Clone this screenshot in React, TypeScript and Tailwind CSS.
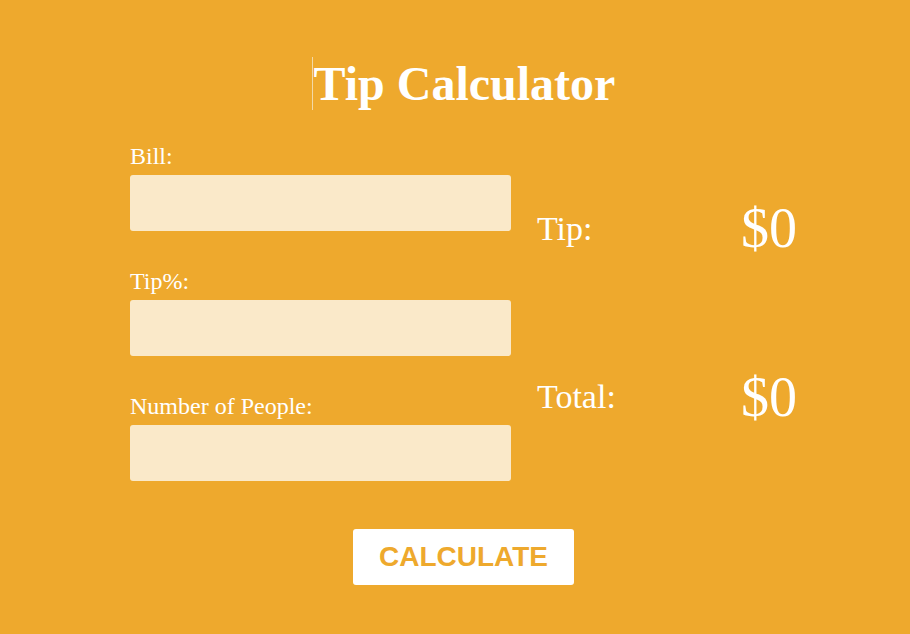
import React from "react";

function Field({ label }: { label: string }) {
  return (
    <div className="flex flex-col">
      <label className="text-[24px] leading-[25px] text-white mb-[6px]">{label}</label>
      <input
        type="text"
        className="h-[56px] w-full rounded-[3px] bg-[#fae9c9] border-0 outline-none px-3 text-[20px]"
      />
    </div>
  );
}

function Result({ label, value }: { label: string; value: string }) {
  return (
    <div className="flex items-center justify-between">
      <span className="text-[34px] text-white">{label}</span>
      <span className="text-[56px] leading-none text-white">{value}</span>
    </div>
  );
}

export default function App() {
  return (
    <div
      className="min-h-screen w-full bg-[#eea92d]"
      style={{ fontFamily: '"Liberation Serif", "Times New Roman", serif' }}
    >
      <div className="mx-auto w-[684px] pl-[17px] pt-[56px]">
        <h1 className="flex items-center justify-center text-[48px] leading-[55px] font-bold text-white">
          <span className="inline-block w-px h-[53px] bg-[#f3d9a6] mr-[1px]" />
          Tip Calculator
        </h1>

        {/* Form + results */}
        <div className="mt-[33px] flex gap-[26px]">
          <div className="w-[381px] flex flex-col gap-[38px]">
            <Field label="Bill:" />
            <Field label="Tip%:" />
            <Field label="Number of People:" />
          </div>
          <div className="flex-1 flex flex-col justify-around">
            <Result label="Tip:" value="$0" />
            <Result label="Total:" value="$0" />
          </div>
        </div>

        <div className="mt-[48px] flex justify-center">
          <button
            className="h-[56px] w-[221px] rounded-[3px] bg-white text-[#eea92d] text-[28px] font-bold"
            style={{ fontFamily: '"Liberation Sans", Arial, sans-serif' }}
          >
            CALCULATE
          </button>
        </div>
      </div>
    </div>
  );
}
